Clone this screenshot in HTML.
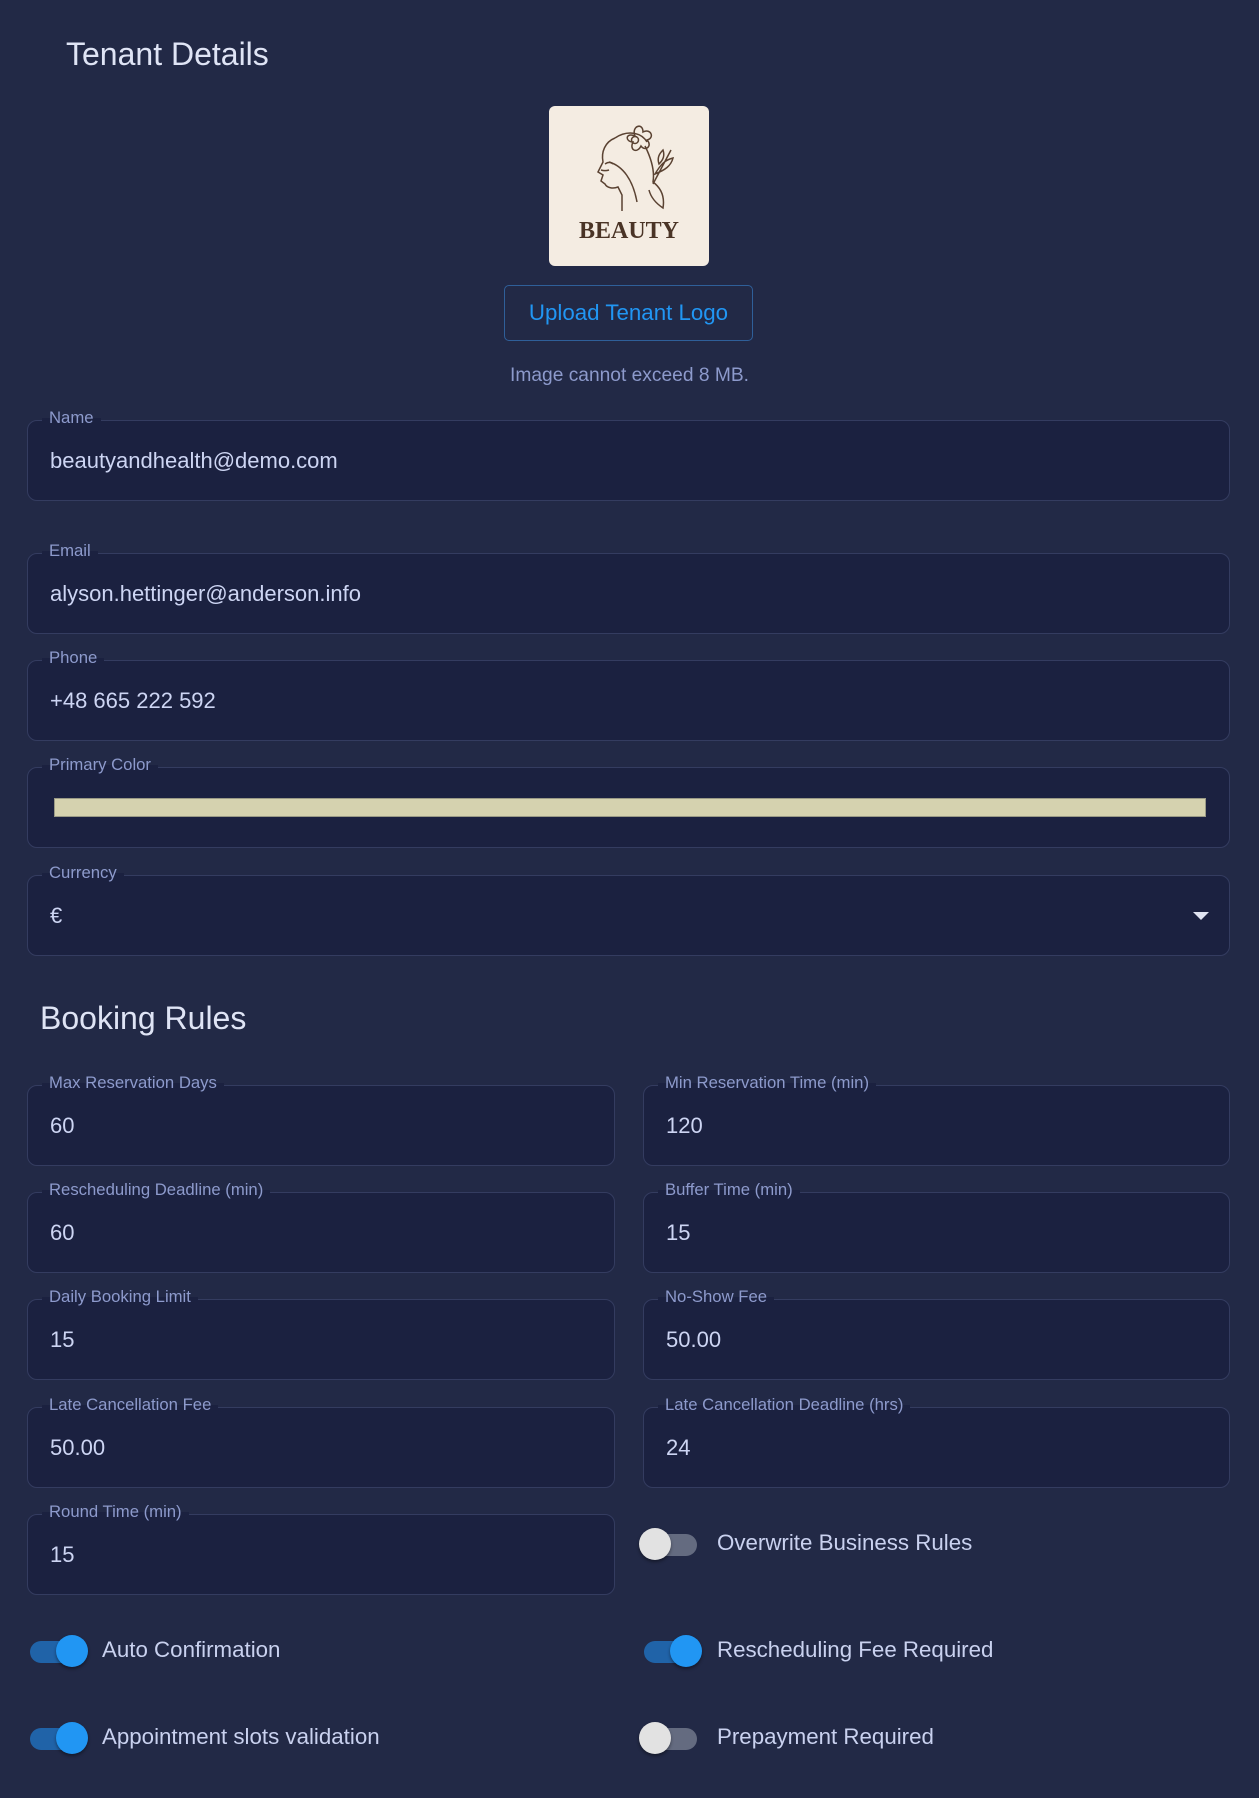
<!DOCTYPE html>
<html><head><meta charset="utf-8"><style>
*{box-sizing:border-box;margin:0;padding:0}
body{width:1259px;height:1798px;background:#222946;font-family:"Liberation Sans",sans-serif;color:#c9d1ef;position:relative;overflow:hidden}
.abs{position:absolute}
h1{position:absolute;font-weight:400;font-size:32px;color:#dfe4f5}
.f{position:absolute;background:#1b2140;border:1px solid #343c60;border-radius:10px;height:81px}
.f .l{position:absolute;top:-13px;left:14px;padding:0 7px;font-size:16.7px;color:#8d9acc;background:linear-gradient(#222946 50%,#1b2140 50%)}
.f .v{position:absolute;left:22px;top:27px;font-size:22px;color:#cdd5f3}
.tg{position:absolute;width:60px;height:32px}
.tg .t{position:absolute;left:2px;top:6px;width:56px;height:22px;border-radius:11px}
.tg .k{position:absolute;top:0;width:32px;height:32px;border-radius:50%;box-shadow:0 2px 3px rgba(0,0,0,.4)}
.on .t{background:#2063a8}.on .k{left:28px;background:#2196f3}
.off .t{background:#646b80}.off .k{left:0;background:#e2e2e2}
.tl{position:absolute;font-size:22.3px;color:#c9d1ef}
</style></head><body>
<h1 style="left:66px;top:36px">Tenant Details</h1>
<div class="abs" style="left:549px;top:106px;width:160px;height:160px;background:#f4ece2;border-radius:6px">
<svg width="160" height="160" viewBox="0 0 160 160" fill="none" stroke="#5a4232" stroke-width="1.5">
<path d="M66 32c-10 4-14 14-12 24l-5 10 5 3-2 6 4 3c2 4 8 5 13 3l4 8 0 16"/>
<path d="M66 32c12-8 26-6 32 4M60 56c14 4 24 18 28 40M96 40c6 12 10 24 8 36 8 6 12 14 10 26-6-4-12-10-14-18"/>
<path d="M52 64c3 1 5 1 8 0M56 58c3-2 6-2 8 0"/>
<circle cx="86" cy="34" r="3.5"/>
<path d="M86 30c-4-10 8-14 8-4 8-4 12 6 4 8 6 6-2 12-6 6-4 8-12 4-8-4-8 0-8-10 2-6z"/>
<path d="M104 78l18-34M106 68c6-10 10-14 18-16-2 8-8 12-18 16zM110 58c-2-6 0-10 4-14 2 6 0 10-4 14z"/>
<text x="80" y="132" text-anchor="middle" font-family="Liberation Serif,serif" font-weight="700" font-size="24" fill="#4a3426" stroke="none">BEAUTY</text>
</svg></div>
<div class="abs" style="left:504px;top:285px;width:249px;height:56px;border:1px solid #2f5f99;border-radius:5px;color:#2196f3;font-size:22.3px;text-align:center;line-height:54px">Upload Tenant Logo</div>
<div class="abs" style="left:0;width:1259px;top:365px;text-align:center;font-size:19.2px;color:#8d9acc">Image cannot exceed 8 MB.</div>

<div class="f" style="left:27px;top:420px;width:1203px"><span class="l">Name</span><span class="v">beautyandhealth@demo.com</span></div>
<div class="f" style="left:27px;top:553px;width:1203px"><span class="l">Email</span><span class="v">alyson.hettinger@anderson.info</span></div>
<div class="f" style="left:27px;top:660px;width:1203px"><span class="l">Phone</span><span class="v">+48 665 222 592</span></div>
<div class="f" style="left:27px;top:767px;width:1203px"><span class="l">Primary Color</span><div class="abs" style="left:26px;top:30px;width:1152px;height:19px;background:#d5d2af;border:1px solid #9a9a86"></div></div>
<div class="f" style="left:27px;top:875px;width:1203px"><span class="l">Currency</span><span class="v">€</span><div class="abs" style="right:20px;top:36px;border-left:8px solid transparent;border-right:8px solid transparent;border-top:8px solid #e0e4f2"></div></div>

<h1 style="left:40px;top:1000px">Booking Rules</h1>

<div class="f" style="left:27px;top:1085px;width:588px"><span class="l">Max Reservation Days</span><span class="v">60</span></div>
<div class="f" style="left:643px;top:1085px;width:587px"><span class="l">Min Reservation Time (min)</span><span class="v">120</span></div>
<div class="f" style="left:27px;top:1192px;width:588px"><span class="l">Rescheduling Deadline (min)</span><span class="v">60</span></div>
<div class="f" style="left:643px;top:1192px;width:587px"><span class="l">Buffer Time (min)</span><span class="v">15</span></div>
<div class="f" style="left:27px;top:1299px;width:588px"><span class="l">Daily Booking Limit</span><span class="v">15</span></div>
<div class="f" style="left:643px;top:1299px;width:587px"><span class="l">No-Show Fee</span><span class="v">50.00</span></div>
<div class="f" style="left:27px;top:1407px;width:588px"><span class="l">Late Cancellation Fee</span><span class="v">50.00</span></div>
<div class="f" style="left:643px;top:1407px;width:587px"><span class="l">Late Cancellation Deadline (hrs)</span><span class="v">24</span></div>
<div class="f" style="left:27px;top:1514px;width:588px"><span class="l">Round Time (min)</span><span class="v">15</span></div>

<div class="tg off" style="left:639px;top:1528px"><div class="t"></div><div class="k"></div></div>
<div class="tl" style="left:717px;top:1530px">Overwrite Business Rules</div>
<div class="tg on" style="left:28px;top:1635px"><div class="t"></div><div class="k"></div></div>
<div class="tl" style="left:102px;top:1637px">Auto Confirmation</div>
<div class="tg on" style="left:642px;top:1635px"><div class="t"></div><div class="k"></div></div>
<div class="tl" style="left:717px;top:1637px">Rescheduling Fee Required</div>
<div class="tg on" style="left:28px;top:1722px"><div class="t"></div><div class="k"></div></div>
<div class="tl" style="left:102px;top:1724px">Appointment slots validation</div>
<div class="tg off" style="left:639px;top:1722px"><div class="t"></div><div class="k"></div></div>
<div class="tl" style="left:717px;top:1724px">Prepayment Required</div>
</body></html>
